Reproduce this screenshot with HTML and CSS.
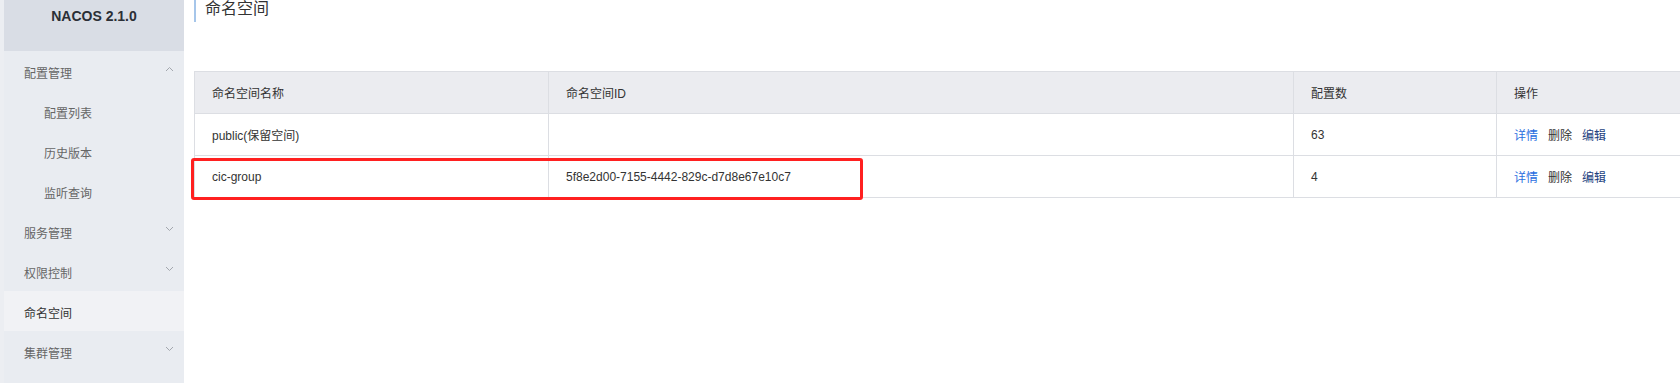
FILE: index.html
```html
<!DOCTYPE html>
<html lang="zh-CN">
<head>
  <meta charset="UTF-8" />
  <meta name="viewport" content="width=device-width, initial-scale=1.0" />
  <title>NACOS 命名空间</title>
  <link rel="stylesheet" href="styles.css">
</head>
<body>
  <div class="sidebar">
    <div class="brand">NACOS 2.1.0</div>
    <ul class="menu">
      <li class="menu-item">配置管理
        <svg class="arrow" width="9" height="6" viewBox="0 0 9 6"><path d="M1 5 L4.5 1.5 L8 5" /></svg>
      </li>
      <li class="menu-item sub">配置列表</li>
      <li class="menu-item sub">历史版本</li>
      <li class="menu-item sub">监听查询</li>
      <li class="menu-item">服务管理
        <svg class="arrow" width="9" height="6" viewBox="0 0 9 6"><path d="M1 1 L4.5 4.5 L8 1" /></svg>
      </li>
      <li class="menu-item">权限控制
        <svg class="arrow" width="9" height="6" viewBox="0 0 9 6"><path d="M1 1 L4.5 4.5 L8 1" /></svg>
      </li>
      <li class="menu-item active">命名空间</li>
      <li class="menu-item">集群管理
        <svg class="arrow" width="9" height="6" viewBox="0 0 9 6"><path d="M1 1 L4.5 4.5 L8 1" /></svg>
      </li>
    </ul>
  </div>

  <div class="main">
    <div class="page-title">命名空间</div>

    <div class="table-wrap">
      <table class="ns-table">
        <colgroup>
          <col style="width: 354px">
          <col style="width: 745px">
          <col style="width: 203px">
          <col style="width: 230px">
        </colgroup>
        <thead>
          <tr>
            <th>命名空间名称</th>
            <th>命名空间ID</th>
            <th>配置数</th>
            <th>操作</th>
          </tr>
        </thead>
        <tbody>
          <tr>
            <td>public(保留空间)</td>
            <td></td>
            <td>63</td>
            <td class="ops"><a class="op-detail">详情</a><a class="op-delete">删除</a><a class="op-edit">编辑</a></td>
          </tr>
          <tr>
            <td>cic-group</td>
            <td>5f8e2d00-7155-4442-829c-d7d8e67e10c7</td>
            <td>4</td>
            <td class="ops"><a class="op-detail">详情</a><a class="op-delete">删除</a><a class="op-edit">编辑</a></td>
          </tr>
        </tbody>
      </table>
      <!-- red annotation box over the cic-group row -->
      <div class="highlight"></div>
    </div>
  </div>
</body>
</html>
```

FILE: styles.css
```css
body {
  margin: 0;
  display: flex;
  height: 383px;
  overflow: hidden;
  background: #fff;
  font-family: "Liberation Sans", "Noto Sans CJK SC", sans-serif;
  font-size: 12px;
  color: #333;
}

.sidebar {
  width: 180px;
  flex-shrink: 0;
  border-left: 4px solid #eceef2;
  background-color: #e9ecf1;
}

.brand {
  height: 51px;
  box-sizing: border-box;
  padding-top: 8px;
  background-color: #d9dde5;
  text-align: center;
  font-weight: bold;
  font-size: 14px;
  color: #2b2f36;
}

.menu {
  list-style: none;
  margin: 0;
  padding: 0;
}

.menu-item {
  height: 40px;
  padding: 2px 10px 0 20px;
  box-sizing: border-box;
  display: flex;
  align-items: center;
  justify-content: space-between;
  color: #666;
}

.menu-item.sub {
  padding-left: 40px;
}

.menu-item.active {
  background-color: #f1f2f5;
  color: #333;
}

.arrow {
  margin-top: -6px;
  fill: none;
  stroke: #a3a7ae;
  stroke-width: 1;
}

.main {
  flex: 1;
  min-width: 0;
  padding-left: 10px;
  overflow: hidden;
}

.page-title {
  height: 22px;
  box-sizing: border-box;
  border-left: 2px solid #a6c6ea;
  padding-left: 9px;
  margin-bottom: 49px;
  font-size: 16px;
  line-height: 18px;
  color: #333;
}

.table-wrap {
  position: relative;
  width: 1532px;
}

.ns-table {
  border-collapse: collapse;
  table-layout: fixed;
  width: 1532px;
}

.ns-table th,
.ns-table td {
  height: 41px;
  padding: 0 17px;
  border: 1px solid #dcdee3;
  text-align: left;
  font-weight: normal;
  white-space: nowrap;
  color: #333;
}

.ns-table th {
  background-color: #ebecf0;
}

.ops a {
  margin-right: 10px;
  cursor: pointer;
}

.op-detail {
  color: #2a6ee0;
}

.op-delete {
  color: #333;
}

.op-edit {
  color: #23427e;
}

.highlight {
  position: absolute;
  left: -3px;
  top: 87px;
  width: 672px;
  height: 42px;
  box-sizing: border-box;
  border: 3px solid #ff2020;
  border-radius: 3px;
}
```
